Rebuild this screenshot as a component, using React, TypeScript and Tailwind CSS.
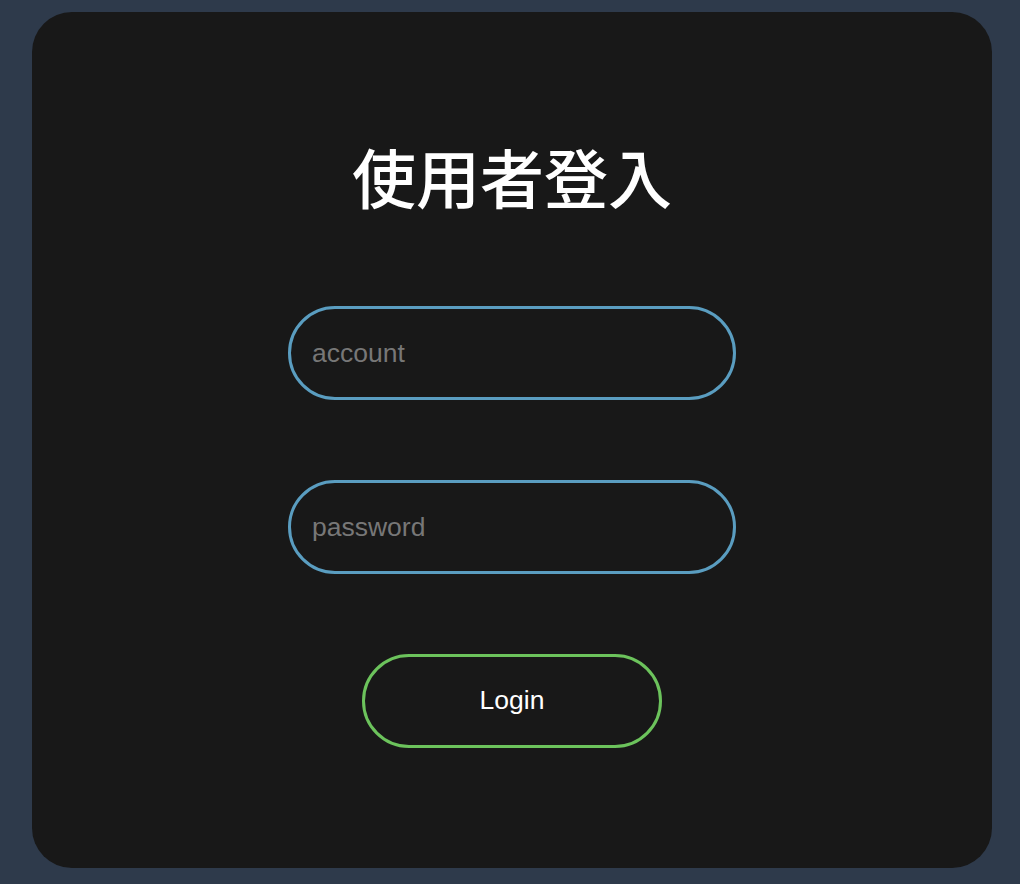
export default function App() {
  return (
    <div className="min-h-[884px] bg-[#2e3a4b] pt-[12px] pl-[32px] pb-[16px]">
      <div className="w-[960px] h-[856px] rounded-[40px] bg-[#181818] flex flex-col items-center pt-[123px]">
        {/* Title */}
        <h1 className="text-[64px] leading-[80px] font-medium text-white font-['Noto_Sans_CJK_TC','Noto_Sans_CJK_SC',sans-serif]">
          使用者登入
        </h1>

        {/* Fields */}
        <div className="mt-[91px] flex flex-col items-center gap-[80px]">
          <input
            type="text"
            placeholder="account"
            className="w-[448px] h-[94px] rounded-full border-[3px] border-[#5a9dc0] bg-transparent px-[21px] text-[26.5px] text-white placeholder:text-[#777777] outline-none font-['Liberation_Sans',Arial,sans-serif]"
          />
          <input
            type="password"
            placeholder="password"
            className="w-[448px] h-[94px] rounded-full border-[3px] border-[#5a9dc0] bg-transparent px-[21px] text-[26.5px] text-white placeholder:text-[#777777] outline-none font-['Liberation_Sans',Arial,sans-serif]"
          />
          <button className="w-[300px] h-[94px] rounded-full border-[3px] border-[#6cc35c] bg-transparent text-[26.5px] text-white font-['Liberation_Sans',Arial,sans-serif]">
            Login
          </button>
        </div>
      </div>
    </div>
  );
}
